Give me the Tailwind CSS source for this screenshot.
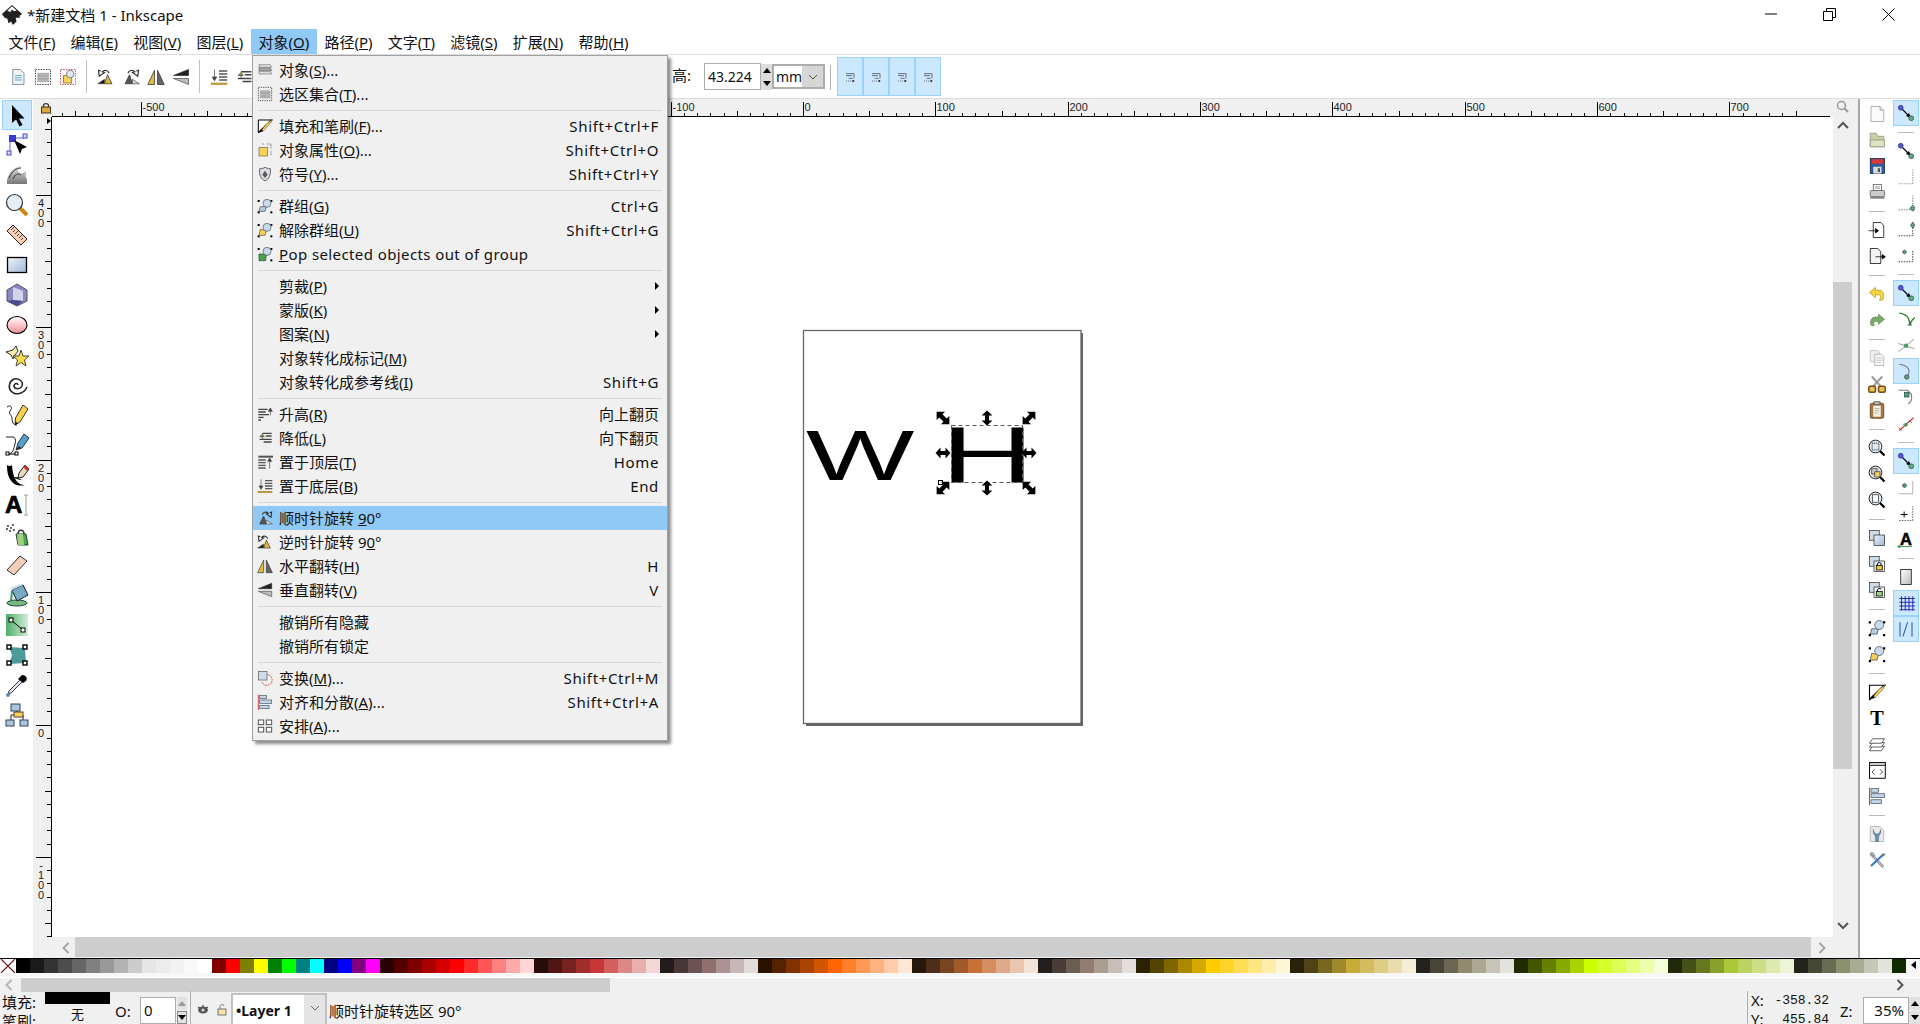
<!DOCTYPE html>
<html lang="zh">
<head>
  <meta charset="UTF-8" />
  <title>*新建文档 1 - Inkscape</title>
  <script src="https://cdn.jsdelivr.net/npm/@tailwindcss/browser@4"></script>
</head>
<body class="w-[1920px] h-[1024px] overflow-hidden bg-[#f0f0f0] text-[15px] text-[#111] font-['Noto_Sans','Noto_Sans_CJK_SC',sans-serif]">

  <!-- icon sheet -->
  <svg class="absolute w-0 h-0" width="0" height="0">
    <defs>
      <linearGradient id="gBlue" x1="0" y1="0" x2="1" y2="1"><stop offset="0" stop-color="#eef4fa"/><stop offset="1" stop-color="#9db8d6"/></linearGradient>
      <linearGradient id="gPink" x1="0" y1="0" x2="0" y2="1"><stop offset="0" stop-color="#fff"/><stop offset="1" stop-color="#f28c96"/></linearGradient>
      <linearGradient id="gGray" x1="0" y1="0" x2="0" y2="1"><stop offset="0" stop-color="#ddd"/><stop offset="1" stop-color="#777"/></linearGradient>
      <linearGradient id="gGreen" x1="0" y1="0" x2="1" y2="0"><stop offset="0" stop-color="#4caf68"/><stop offset="1" stop-color="#d4ecd8"/></linearGradient>
      <linearGradient id="gPage" x1="0" y1="0" x2="1" y2="1"><stop offset="0" stop-color="#fff"/><stop offset="1" stop-color="#bbb"/></linearGradient>
      <symbol id="t-sel" viewBox="0 0 24 24"><path d="M7 2V20L11 16.5L14.5 23.5L17.5 22L14 15.5H19.5Z" fill="#000"/></symbol>
      <symbol id="t-node" viewBox="0 0 24 24"><path d="M8 5H19M5 9V19" stroke="#66c" fill="none"/><rect x="4" y="2" width="7" height="7" fill="#3a3ad0"/><rect x="18" y="1" width="4" height="4" fill="#dde" stroke="#44c"/><rect x="2" y="18" width="4" height="4" fill="#dde" stroke="#44c"/><path d="M9 7L22 14L17 16L15 21Z" fill="#000"/></symbol>
      <symbol id="t-tweak" viewBox="0 0 24 24"><path d="M2 21V17C5 8 10 2 17 4C12 5 12 9 15 10C18 11 20 9 21 8C21 12 20 14 22 16V21Z" fill="url(#gGray)"/><path d="M4 15C7 8 11 5 16 5M8 16C10 11 13 10 16 12" stroke="#333" fill="none"/></symbol>
      <symbol id="t-zoom" viewBox="0 0 24 24"><path d="M14 14L22 22" stroke="#c98a17" stroke-width="4"/><circle cx="9.5" cy="9.500" r="8" fill="#e5eef5" stroke="#333" stroke-width="1.200"/></symbol>
      <symbol id="t-measure" viewBox="0 0 24 24"><path d="M8 2L22 16L16 22L2 8Z" fill="#f4cdb4" stroke="#222"/><path d="M6 7L9 4M8 9L10 7M10 11L13 8M12 13L14 11M14 15L17 12M16 17L18 15" stroke="#222" stroke-width=".8"/></symbol>
      <symbol id="t-rect" viewBox="0 0 24 24"><rect x="2.500" y="4.500" width="19" height="15" fill="url(#gBlue)" stroke="#000" stroke-width="1.300"/></symbol>
      <symbol id="t-3d" viewBox="0 0 24 24"><path d="M12 1L22 7V18L12 23L2 18V7Z" fill="#8a87c4" stroke="#555"/><path d="M8 4L18 8V18L8 17Z" fill="#d4d3ec"/><path d="M8 17L18 18L12 23L2 18Z" fill="#4d4a92"/></symbol>
      <symbol id="t-ell" viewBox="0 0 24 24"><ellipse cx="12" cy="12" rx="10" ry="8.500" fill="url(#gPink)" stroke="#000" stroke-width="1.100"/></symbol>
      <symbol id="t-star" viewBox="0 0 24 24"><path d="M1 9L8 7L11 3L13 8L10 12L8 16L6 12Z" fill="#f5edb0" stroke="#333"/><path d="M16 7L18 13L24 13L19.500 17L21 23L16 19.500L11 23L12.500 17L8 13L14 13Z" fill="#f7dc4d" stroke="#333" stroke-width=".9"/></symbol>
      <symbol id="t-spiral" viewBox="0 0 24 24"><path d="M13 12C13 10 9 10 9 13C9 16 15 17 17 13C19 8 13 5 9 6C4 8 3 15 6 18C10 23 19 21 22 14" fill="none" stroke="#222" stroke-width="1.500"/></symbol>
      <symbol id="t-pencil" viewBox="0 0 24 24"><path d="M2 4C6 1 8 5 5 8C3 11 7 12 7 15C7 19 8 22 12 22" fill="none" stroke="#222"/><path d="M18 2L23 6L15 19L10 22L10.500 15Z" fill="#f6d24a" stroke="#333"/><path d="M10.500 19L10 22L13 20Z" fill="#000"/></symbol>
      <symbol id="t-pen" viewBox="0 0 24 24"><path d="M1 4H8C13 5 9 14 8 18C6 21 4 21 2 21" fill="none" stroke="#222"/><rect x="1" y="19" width="3" height="3" fill="#fff" stroke="#000"/><rect x="10" y="19" width="3" height="3" fill="#fff" stroke="#000"/><path d="M4 21H10" stroke="#000"/><path d="M19 1L24 5L17 15L11 17L13 10Z" fill="#5a9fc9" stroke="#234"/><path d="M11 17L14 13L16 15Z" fill="#222"/></symbol>
      <symbol id="t-cal" viewBox="0 0 24 24"><path d="M2 2C2 9 3 15 8 20C12 23 16 23 20 22C14 22 8 18 7 2C5 4 4 3 2 2Z" fill="#000"/><path d="M8 14C10 15 13 17 17 17L12 14Z" fill="#222"/><path d="M20 2L24 6L18 14L13 15L14 10Z" fill="#e8dcc0" stroke="#222"/><path d="M20 2L24 6L22 8L18 4Z" fill="#c33"/></symbol>
      <symbol id="t-txt" viewBox="0 0 24 24"><text x="0" y="20" font-family="Liberation Sans" font-weight="700" font-size="24" fill="#000" stroke="#000" stroke-width=".7">A</text><path d="M19 2H23M21 2V22M19 22H23" stroke="#888" stroke-width=".8" fill="none"/></symbol>
      <symbol id="t-spray" viewBox="0 0 24 24"><path d="M2 3H4M5 5H7M1 6H3M4 8H6M7 2H9M8 7H10" stroke="#333" stroke-width="1.500"/><path d="M11 11H21L23 22H13Z" fill="#4ca34c" stroke="#243"/><path d="M13 11C13 6 19 6 19 11" stroke="#333" fill="none" stroke-width="1.500"/><path d="M12 11H18L19 22H13Z" fill="#9dcf7e"/></symbol>
      <symbol id="t-eraser" viewBox="0 0 24 24"><path d="M15 3L22 8L9 22L2 17Z" fill="#f5cdb9" stroke="#333"/></symbol>
      <symbol id="t-bucket" viewBox="0 0 24 24"><ellipse cx="12" cy="20" rx="10" ry="3" fill="#78b878" stroke="#244"/><path d="M7 7L18 2L23 12L12 18Z" fill="#7aa9c4" stroke="#123"/><path d="M7 7L18 2L16 1L5 5Z" fill="#cde"/><path d="M7 8L6 19" stroke="#396" stroke-width="2"/></symbol>
      <symbol id="t-grad" viewBox="0 0 24 24"><rect x="1" y="1" width="22" height="22" fill="url(#gGreen)"/><path d="M6 7L18 17" stroke="#000"/><rect x="4" y="5" width="4" height="4" fill="#fff" stroke="#000"/><rect x="16" y="15" width="4" height="4" fill="#fff" stroke="#000"/></symbol>
      <symbol id="t-mesh" viewBox="0 0 24 24"><path d="M4 4L20 5L21 20L4 21L7 12Z" fill="#4d9a9a"/><g fill="#fff" stroke="#000" stroke-width="1.400"><rect x="2" y="2" width="4" height="4"/><rect x="18" y="2" width="4" height="4"/><rect x="2" y="18" width="4" height="4"/><rect x="18" y="18" width="4" height="4"/></g></symbol>
      <symbol id="t-drop" viewBox="0 0 24 24"><path d="M16 3C18 0 24 5 21 8L18 10L13 6Z" fill="#000"/><path d="M15 7L17 9L6 20L3 21L4 18Z" fill="#dfe8ee" stroke="#334"/><circle cx="3" cy="22" r="2" fill="#6a8ba8"/></symbol>
      <symbol id="t-conn" viewBox="0 0 24 24"><path d="M6 12V18M18 12V18M6 12H18M12 7V12" stroke="#222" fill="none"/><rect x="6" y="1" width="9" height="7" fill="#a8c4e0" stroke="#345"/><rect x="9" y="9" width="9" height="5" fill="#f5d25a" stroke="#543"/><rect x="1" y="17" width="8" height="6" fill="#a8c4e0" stroke="#345"/><rect x="15" y="17" width="8" height="6" fill="#a8c4e0" stroke="#345"/></symbol>

      <symbol id="c-new" viewBox="0 0 24 24"><path d="M4 2H16L21 7V22H4Z" fill="#fafafa" stroke="#999"/><path d="M16 2V7H21" fill="#ddd" stroke="#999"/></symbol>
      <symbol id="c-open" viewBox="0 0 24 24"><path d="M3 3H11L13 7H21V21H3Z" fill="#c8d0a8" stroke="#8a9070"/><path d="M3 12H22V21H3Z" fill="#dfe5c4" stroke="#8a9070"/></symbol>
      <symbol id="c-save" viewBox="0 0 24 24"><rect x="3" y="2" width="19" height="20" fill="#2b5c9f" stroke="#123"/><rect x="5" y="3" width="15" height="6" fill="#d73a3a"/><rect x="7" y="13" width="11" height="9" fill="#ddd"/><rect x="13" y="15" width="3" height="5" fill="#456"/></symbol>
      <symbol id="c-print" viewBox="0 0 24 24"><rect x="7" y="2" width="11" height="9" fill="#fff" stroke="#555"/><path d="M9 5H16M9 7H16" stroke="#888"/><rect x="3" y="10" width="19" height="8" rx="1" fill="#ccc" stroke="#555"/><rect x="3" y="18" width="19" height="3" fill="#888"/></symbol>
      <symbol id="c-imp" viewBox="0 0 24 24"><path d="M7 2H17L21 6V22H7Z" fill="#fff" stroke="#000"/><path d="M1 13H13M10 10L14 13L10 16Z" stroke="#000" fill="#000"/></symbol>
      <symbol id="c-exp" viewBox="0 0 24 24"><path d="M3 2H13L17 6V22H3Z" fill="#f4f4f4" stroke="#000"/><path d="M10 13H23M19 10L23 13L19 16Z" stroke="#000" fill="#000"/></symbol>
      <symbol id="c-undo" viewBox="0 0 24 24"><path d="M2 10L10 3V7H16C21 8 22 14 20 19C19 21 17 21 15 20C18 17 17 13 14 13H10V17Z" fill="#f3d43e" stroke="#b59a20"/></symbol>
      <symbol id="c-redo" viewBox="0 0 24 24"><path d="M22 11L14 4V8H9C4 9 2 14 4 19C6 20 7 20 9 19C6 17 8 14 10 14H14V18Z" fill="#7aa868" stroke="#4a6e3a" stroke-dasharray="1.500 1"/></symbol>
      <symbol id="c-copy" viewBox="0 0 24 24"><path d="M3 2H13L15 4V17H3Z" fill="#eee" stroke="#bbb"/><path d="M9 7H18L21 10V22H9Z" fill="#f6f6f6" stroke="#aaa"/><path d="M11 12H19M11 15H19M11 18H17" stroke="#bbb"/></symbol>
      <symbol id="c-cut" viewBox="0 0 24 24"><path d="M5 2L17 15M19 2L7 15" stroke="#999" stroke-width="2.500"/><rect x="1" y="15" width="9" height="8" rx="2" fill="#e0c060" stroke="#7a4a10" stroke-width="2"/><rect x="14" y="15" width="9" height="8" rx="2" fill="#e0c060" stroke="#7a4a10" stroke-width="2"/></symbol>
      <symbol id="c-paste" viewBox="0 0 24 24"><rect x="3" y="3" width="18" height="20" rx="2" fill="#a9763d" stroke="#5d3a14"/><path d="M7 6H17V21H7Z" fill="#f4f0e6"/><rect x="8" y="1" width="8" height="4" fill="#bbb" stroke="#444"/><path d="M9 10H15M9 13H15M9 16H13" stroke="#999"/></symbol>
      <symbol id="c-zsel" viewBox="0 0 24 24"><path d="M15 15L22 22" stroke="#000" stroke-width="3"/><circle cx="10" cy="10" r="8.500" fill="#dfe9f0" stroke="#222" stroke-width="1.300"/><rect x="5.500" y="5.500" width="9" height="9" fill="none" stroke="#000" stroke-dasharray="1.500 1"/></symbol>
      <symbol id="c-zdraw" viewBox="0 0 24 24"><path d="M15 15L22 22" stroke="#000" stroke-width="3"/><circle cx="10" cy="10" r="8.500" fill="#dfe9f0" stroke="#222" stroke-width="1.300"/><rect x="5" y="5" width="7" height="7" fill="#ccc" stroke="#333"/><rect x="9" y="9" width="7" height="7" fill="#f5d25a" stroke="#333"/></symbol>
      <symbol id="c-zpage" viewBox="0 0 24 24"><path d="M15 15L22 22" stroke="#000" stroke-width="3"/><circle cx="10" cy="10" r="8.500" fill="#dfe9f0" stroke="#222" stroke-width="1.300"/><rect x="6" y="5" width="8" height="10" fill="#fff" stroke="#333"/></symbol>
      <symbol id="c-dup" viewBox="0 0 24 24"><rect x="2" y="2" width="13" height="13" fill="#cfdcea" stroke="#333"/><rect x="8" y="8" width="14" height="14" fill="url(#gBlue)" stroke="#333"/></symbol>
      <symbol id="c-clone" viewBox="0 0 24 24"><rect x="2" y="2" width="13" height="13" fill="#cfdcea" stroke="#333"/><rect x="8" y="8" width="14" height="14" fill="#eef2f6" stroke="#333"/><rect x="11" y="14" width="8" height="6" fill="#f0c93c" stroke="#000"/><path d="M12.500 14V12C12.500 9.500 17.500 9.500 17.500 12V14" fill="none" stroke="#000" stroke-width="1.300"/></symbol>
      <symbol id="c-unl" viewBox="0 0 24 24"><rect x="2" y="2" width="13" height="13" fill="#cfdcea" stroke="#333"/><rect x="8" y="8" width="14" height="14" fill="#eef2f6" stroke="#333"/><rect x="11" y="14" width="8" height="6" fill="#9dcf7e" stroke="#000"/><path d="M12.500 14V12C12.500 9.500 17.500 9.500 17.500 11" fill="none" stroke="#000" stroke-width="1.300"/></symbol>
      <symbol id="c-grp" viewBox="0 0 24 24"><g fill="#000"><rect x="1" y="3" width="3" height="3"/><rect x="20" y="3" width="3" height="3"/><rect x="1" y="20" width="3" height="3"/><rect x="20" y="20" width="3" height="3"/></g><path d="M5 13H14L12 20H3Z" fill="#b9cce0" stroke="#345"/><circle cx="15" cy="8" r="6" fill="#c9d9e8" stroke="#456"/></symbol>
      <symbol id="c-ungrp" viewBox="0 0 24 24"><g fill="#000"><rect x="1" y="3" width="3" height="3"/><rect x="20" y="3" width="3" height="3"/><rect x="1" y="20" width="3" height="3"/><rect x="20" y="20" width="3" height="3"/></g><path d="M5 11L14 13L12 20H3Z" fill="#f5d25a" stroke="#543"/><circle cx="15" cy="8" r="6" fill="#c9d9e8" stroke="#456"/></symbol>
      <symbol id="c-pop" viewBox="0 0 24 24"><g fill="#000"><rect x="1" y="3" width="3" height="3"/><rect x="20" y="3" width="3" height="3"/><rect x="20" y="20" width="3" height="3"/></g><path d="M3 12H14L13 22H3Z" fill="#4ca34c" stroke="#243"/><circle cx="15" cy="8" r="6" fill="#c9d9e8" stroke="#456"/></symbol>
      <symbol id="c-fill" viewBox="0 0 24 24"><path d="M2 3H22L2 22Z" fill="#fff" stroke="#000" stroke-width="1.500"/><path d="M2 22H22V3Z" fill="none"/><path d="M2 22L22 3" stroke="#000" stroke-width="2"/><path d="M9 20L20 8L24 2L15 8L7 18Z" fill="#f5d25a" stroke="#432" stroke-width=".7"/><path d="M2 22L9 20L7 16Z" fill="#000"/></symbol>
      <symbol id="c-t" viewBox="0 0 24 24"><text x="12" y="21" text-anchor="middle" font-family="Liberation Serif" font-weight="700" font-size="27" fill="#000">T</text></symbol>
      <symbol id="c-layers" viewBox="0 0 24 24"><g fill="#fff" stroke="#333"><path d="M6 15H22L18 21H2Z"/><path d="M6 10H22L18 16H2Z"/><path d="M6 5H22L18 11H2Z"/></g></symbol>
      <symbol id="c-xml" viewBox="0 0 24 24"><rect x="2" y="2" width="21" height="21" fill="#fff" stroke="#000" stroke-width="1.300"/><rect x="2" y="2" width="21" height="4" fill="#ccc" stroke="#000"/><path d="M9 11L5.500 14.500L9 18M16 11L19.500 14.500L16 18" fill="none" stroke="#333" stroke-width="1.200"/></symbol>
      <symbol id="c-align" viewBox="0 0 24 24"><path d="M2 1V24" stroke="#c83232" stroke-width="1.300"/><rect x="4" y="2" width="10" height="5" fill="#c5d6e8" stroke="#456"/><rect x="4" y="9" width="18" height="5" fill="#c5d6e8" stroke="#456"/><rect x="4" y="17" width="14" height="5" fill="#c5d6e8" stroke="#456"/></symbol>
      <symbol id="c-doc" viewBox="0 0 24 24"><path d="M3 2H16L21 7V22H3Z" fill="#e8e8e8" stroke="#aaa"/><path d="M7 6C8 11 10 12 12 12C14 12 16 11 17 6V10C16 13 14 14 14 16V22H10V16C10 14 8 13 7 10Z" fill="#5f92bf" stroke="#345" stroke-width=".5"/></symbol>
      <symbol id="c-pref" viewBox="0 0 24 24"><path d="M5 3L21 20L19 22L3 5Z" fill="#bbb" stroke="#778"/><path d="M21 4L4 20" stroke="#3c7ab8" stroke-width="3"/><path d="M3 3C6 1 9 3 8 7L5 6Z M21 3L23 5L19 7Z" fill="#bbb" stroke="#667"/></symbol>

      <symbol id="s-nodes" viewBox="0 0 24 24"><path d="M6 6L17 17" stroke="#000" stroke-width="1.500"/><path d="M19 19L12 16L16 12Z" fill="#000"/><circle cx="5" cy="5" r="3.200" fill="#5555dd" stroke="#337"/><circle cx="19" cy="19" r="3.200" fill="#66aa88" stroke="#254"/></symbol>
      <symbol id="s-bbox" viewBox="0 0 24 24"><path d="M2 21H21M21 21V2" stroke="#777" stroke-dasharray="2 1.500" fill="none"/></symbol>
      <symbol id="s-bbedge" viewBox="0 0 24 24"><path d="M2 21H21M21 21V2" stroke="#555" stroke-dasharray="2 1.500" fill="none"/><path d="M21 15L25 19L21 23L17 19Z" fill="#6a9a80" stroke="#354"/></symbol>
      <symbol id="s-mid" viewBox="0 0 24 24"><path d="M2 21H21V2" stroke="#000" stroke-dasharray="2 1.500" fill="none"/><path d="M21 3L24 7L21 11L18 7Z" fill="#6a9a80" stroke="#354"/></symbol>
      <symbol id="s-cen" viewBox="0 0 24 24"><path d="M2 21H21V5" stroke="#000" stroke-dasharray="2 1.500" fill="none"/><path d="M10 5L13 8L10 11L7 8Z" fill="#6a9a80" stroke="#354"/></symbol>
      <symbol id="s-curve" viewBox="0 0 24 24"><path d="M3 4C12 5 17 10 17 20C19 14 21 12 24 10M14 20L20 20" stroke="#286e28" stroke-width="1.500" fill="none"/></symbol>
      <symbol id="s-inter" viewBox="0 0 24 24"><path d="M2 21L23 4M2 10L23 17" stroke="#777"/><circle cx="12" cy="13" r="3" fill="#4a9a6a"/></symbol>
      <symbol id="s-cusp" viewBox="0 0 24 24"><path d="M3 3C12 4 20 9 14 19" stroke="#778" stroke-width="1.500" fill="none"/><circle cx="13" cy="20" r="3" fill="#5a9a80" stroke="#354"/></symbol>
      <symbol id="s-smooth" viewBox="0 0 24 24"><path d="M2 3H14L19 8C21 15 18 20 15 21" stroke="#778" stroke-width="1.500" fill="none"/><rect x="10" y="6" width="6" height="6" fill="#5a9a80" stroke="#254"/></symbol>
      <symbol id="s-path" viewBox="0 0 24 24"><path d="M3 22L22 5" stroke="#c83232" stroke-width="1.500"/><path d="M2 18L7 22M8 13L12 17M16 8L20 12" stroke="#c83232"/><circle cx="12" cy="14" r="2.500" fill="#4a9a6a"/></symbol>
      <symbol id="s-cpage" viewBox="0 0 24 24"><path d="M3 21H21V4" stroke="#999" fill="none"/><circle cx="10" cy="10" r="2.500" fill="#5a9a80" stroke="#254"/></symbol>
      <symbol id="s-guide" viewBox="0 0 24 24"><path d="M3 22H21M21 22V3" stroke="#333" stroke-dasharray="2 1.500" fill="none"/><path d="M5 14H14M9.500 10V18" stroke="#000" stroke-width="1.300"/></symbol>
      <symbol id="s-text" viewBox="0 0 24 24"><text x="4" y="20" font-family="Liberation Sans" font-weight="700" font-size="22" fill="#000" stroke="#000" stroke-width=".6">A</text><path d="M1 22H20" stroke="#4a9a6a" stroke-width="1.500"/><circle cx="3" cy="22" r="2" fill="#4a9a6a"/></symbol>
      <symbol id="s-page" viewBox="0 0 24 24"><rect x="5" y="2" width="14" height="20" fill="url(#gPage)" stroke="#000"/></symbol>
      <symbol id="s-grid" viewBox="0 0 24 24"><path d="M6 3V22M11 3V22M16 3V22M21 3V22M3 6H24M3 11H24M3 16H24M3 21H24" stroke="#1a1ab0" stroke-width="1.200"/></symbol>
      <symbol id="s-glines" viewBox="0 0 24 24"><path d="M4 3V22M20 3V22M14 3L8 22" stroke="#1a4ab0" stroke-width="1.300"/></symbol>
      <symbol id="s-btn" viewBox="0 0 24 24"><path d="M6 7H18V14M6 10H15M10 14H16" stroke="#333" fill="none"/><path d="M6 18H18" stroke="#333" stroke-dasharray="1.500 1.500"/><path d="M16 16L19 18L16 20Z" fill="#000"/></symbol>

      <symbol id="m-objs" viewBox="0 0 24 24"><path d="M3 4H20L22 8H3Z" fill="#ddd" stroke="#777"/><path d="M3 9H20L22 13H3Z" fill="#aaa" stroke="#666"/><path d="M3 14H20L22 18H3Z" fill="#ddd" stroke="#777"/></symbol>
      <symbol id="m-selset" viewBox="0 0 24 24"><rect x="2" y="2" width="20" height="20" fill="none" stroke="#111" stroke-dasharray="2 1.500"/><path d="M5 7H19L20 10H5ZM5 11H19L20 14H5ZM5 15H19L20 18H5Z" fill="#bbb" stroke="#777" stroke-width=".6"/></symbol>
      <symbol id="m-selred" viewBox="0 0 24 24"><rect x="2" y="2" width="20" height="20" fill="none" stroke="#b22" stroke-dasharray="2 1.500"/><rect x="6" y="10" width="11" height="10" fill="#f5d25a" stroke="#763"/><circle cx="15" cy="8" r="5" fill="#dfe9f0" stroke="#667"/></symbol>
      <symbol id="m-doc" viewBox="0 0 24 24"><path d="M5 2H15L20 7V22H5Z" fill="#eef3f8" stroke="#678"/><path d="M8 10H17M8 13H17M8 16H17" stroke="#39a"/></symbol>
      <symbol id="m-props" viewBox="0 0 24 24"><rect x="3" y="8" width="13" height="13" fill="#f5d25a" stroke="#763"/><path d="M15 3H21V10M21 14V21M8 3H11" stroke="#333" stroke-dasharray="2 1.500" fill="none"/></symbol>
      <symbol id="m-shield" viewBox="0 0 24 24"><path d="M4 4C9 4 10 3 12 2C14 3 16 4 20 4C21 14 18 20 12 22C6 20 3 14 4 4Z" fill="#ddd" stroke="#666" stroke-width="1.500"/><path d="M12 7L16 13L12 18L8 13Z" fill="#556"/></symbol>
      <symbol id="m-raise" viewBox="0 0 24 24"><path d="M2 5H16M2 9H13M2 13H18M2 17H10M2 21H6" stroke="#444" stroke-width="2"/><path d="M20 14V6M17 8L20 3L23 8Z" stroke="#444" fill="#444"/></symbol>
      <symbol id="m-lower" viewBox="0 0 24 24"><path d="M22 5H8M22 9H13M22 14H4M22 18H10" stroke="#444" stroke-width="2"/><path d="M8 14V9M4 10L8 6L11 10Z" stroke="#444" fill="#b89a40"/></symbol>
      <symbol id="m-top" viewBox="0 0 24 24"><path d="M2 4H24" stroke="#555" stroke-width="3"/><path d="M2 9H13M2 13H13M2 17H13M2 21H13" stroke="#555" stroke-width="2"/><path d="M19 22V10M16 11L19 6L22 11Z" stroke="#444" fill="#444"/></symbol>
      <symbol id="m-bot" viewBox="0 0 24 24"><path d="M12 4H23M12 8H23M12 12H23M12 16H23" stroke="#555" stroke-width="2"/><path d="M1 21H23" stroke="#b89a40" stroke-width="3"/><path d="M6 2V13M3 12L6 17L9 12Z" stroke="#444" fill="#444"/></symbol>
      <symbol id="m-cw" viewBox="0 0 24 24"><path d="M8 7C9 3 14 2 17 5L14 6L21 11L22 3L19 4" fill="none" stroke="#333" stroke-width="1.600"/><path d="M4 21L10 9L14 21Z" fill="#555" stroke="#333"/><path d="M14 21H23L14 15Z" fill="#ddd" stroke="#555"/></symbol>
      <symbol id="m-ccw" viewBox="0 0 24 24"><path d="M16 7C15 3 10 2 7 5L10 6L3 11L2 3L5 4" fill="none" stroke="#333" stroke-width="1.600"/><path d="M20 21L14 9L10 21Z" fill="#e0b840" stroke="#333"/><path d="M10 21H1L10 15Z" fill="#111" stroke="#555"/></symbol>
      <symbol id="m-fh" viewBox="0 0 24 24"><path d="M10 3V22H1Z" fill="#e3b93c" stroke="#333"/><path d="M14 3V22H23Z" fill="#666" stroke="#333"/></symbol>
      <symbol id="m-fv" viewBox="0 0 24 24"><path d="M22 2V10L2 10Z" fill="#222" stroke="#333"/><path d="M22 14V22L2 14Z" fill="#bbb" stroke="#555"/></symbol>
      <symbol id="m-trans" viewBox="0 0 24 24"><rect x="2" y="2" width="13" height="13" fill="#cfdcea" stroke="#555"/><path d="M15 7A8 8 0 1 1 7 17" fill="none" stroke="#c83232" stroke-dasharray="2 1.500" stroke-width="1.500"/></symbol>
      <symbol id="m-arr" viewBox="0 0 24 24"><g fill="#fff" stroke="#555" stroke-width="1.500"><rect x="2" y="3" width="8" height="7"/><rect x="14" y="3" width="8" height="7"/><rect x="2" y="14" width="8" height="7"/><rect x="14" y="14" width="8" height="7"/></g></symbol>
    </defs>
  </svg>

  <!-- title bar -->
  <div class="h-[29px] bg-white flex items-center relative">
    <svg class="w-[22px] h-[22px] ml-[1px]" viewBox="0 0 24 24"><path d="M12 1L23 11L20 13L21 15L16 15L17 19L13 23L11 19L8 21L7 16L4 15L1 11Z" fill="#222"/><path d="M12 2.500L17 7L14 8L12 6L10 9L7 7Z" fill="#fff"/></svg>
    <span class="ml-[4px] leading-[20px]">*新建文档 1 - Inkscape</span>
    <svg class="absolute left-[1765px] top-[13px] w-[12px] h-[2px]" viewBox="0 0 12 2"><path d="M0 1H12" stroke="#000"/></svg>
    <svg class="absolute left-[1823px] top-[8px] w-[13px] h-[13px]" viewBox="0 0 13 13"><path d="M.5 3.500H9.500V12.500H.5ZM3.500 3.500V.5H12.500V9.500H9.500" fill="none" stroke="#000"/></svg>
    <svg class="absolute left-[1882px] top-[8px] w-[13px] h-[13px]" viewBox="0 0 13 13"><path d="M.5 .5L12.500 12.500M12.500 .5L.5 12.500" stroke="#000"/></svg>
  </div>

  <!-- menu bar -->
  <div class="h-[26px] bg-white border-b border-[#dcdcdc] flex pl-[1px]">
    <div class="px-[7.6px] leading-[27px]">文件(<u>F</u>)</div>
    <div class="px-[7.6px] leading-[27px]">编辑(<u>E</u>)</div>
    <div class="px-[7.6px] leading-[27px]">视图(<u>V</u>)</div>
    <div class="px-[7.6px] leading-[27px]">图层(<u>L</u>)</div>
    <div class="px-[7.6px] leading-[27px] bg-[#90c8f6]">对象(<u>O</u>)</div>
    <div class="px-[7.6px] leading-[27px]">路径(<u>P</u>)</div>
    <div class="px-[7.6px] leading-[27px]">文字(<u>T</u>)</div>
    <div class="px-[7.6px] leading-[27px]">滤镜(<u>S</u>)</div>
    <div class="px-[7.6px] leading-[27px]">扩展(<u>N</u>)</div>
    <div class="px-[7.6px] leading-[27px]">帮助(<u>H</u>)</div>
  </div>

  <!-- command bar -->
  <div class="h-[44px] bg-white border-b border-[#dcdcdc] flex items-center relative">
    <div id="topIcons" class="flex items-center pl-[5px]"></div>
    <span class="absolute left-[672px] top-[10px] leading-[20px]">高:</span>
    <div class="absolute left-[704px] top-[8px] w-[57px] h-[27px] border border-[#adadad] bg-white pl-[3px] leading-[25px] text-[14px]">43.224</div>
    <div class="absolute left-[761px] top-[9px] w-[11px] h-[26px] flex flex-col bg-[#dcdcdc]">
      <div class="h-[13px] flex items-center justify-center"><div class="w-0 h-0 border-x-[4px] border-x-transparent border-b-[5px] border-b-black"></div></div>
      <div class="h-[13px] flex items-center justify-center"><div class="w-0 h-0 border-x-[4px] border-x-transparent border-t-[5px] border-t-black"></div></div>
    </div>
    <div class="absolute left-[772px] top-[9px] w-[53px] h-[25px] border-2 border-[#adadad] bg-white flex items-center pl-[2px]">
      <span class="leading-[20px] text-[14px]">mm</span>
      <div class="ml-auto w-[21px] h-full bg-[#d6d6d6] flex items-center justify-center">
        <svg class="w-[10px] h-[6px]" viewBox="0 0 10 6"><path d="M1 1L5 5L9 1" fill="none" stroke="#555"/></svg>
      </div>
    </div>
    <div class="absolute left-[830px] top-[10px] w-px h-[25px] bg-[#b0b0b0]"></div>
    <div class="absolute left-[837px] top-[2px] flex">
      <div class="w-[26px] h-[39px] bg-[#cce8ff] border border-[#99d1ff] flex items-center justify-center"><svg class="w-4 h-4"><use href="#s-btn"/></svg></div>
      <div class="w-[26px] h-[39px] bg-[#cce8ff] border border-[#99d1ff] flex items-center justify-center"><svg class="w-4 h-4"><use href="#s-btn"/></svg></div>
      <div class="w-[26px] h-[39px] bg-[#cce8ff] border border-[#99d1ff] flex items-center justify-center"><svg class="w-4 h-4"><use href="#s-btn"/></svg></div>
      <div class="w-[26px] h-[39px] bg-[#cce8ff] border border-[#99d1ff] flex items-center justify-center"><svg class="w-4 h-4"><use href="#s-btn"/></svg></div>
    </div>
  </div>

  <!-- main area -->
  <div class="h-[859px] flex">
    <div id="tools" class="w-[33px] bg-white flex flex-col items-center pt-px"></div>

    <div class="w-[1800px] flex flex-col">
      <div class="h-[18px] relative">
        <svg id="rulerTop" class="w-[1800px] h-[18px] block"></svg>
        <svg class="absolute left-[7px] top-[3px] w-3 h-3" viewBox="0 0 12 12"><rect x="1.500" y="5" width="9" height="6" fill="#d9a93a" stroke="#432"/><path d="M3.500 5V3.500C3.500 1 8.500 1 8.500 3.500V5" fill="none" stroke="#432" stroke-width="1.300"/></svg>
      </div>
      <div class="h-[820px] flex">
        <svg id="rulerLeft" class="w-[19px] h-[820px] block"></svg>
        <svg class="w-[1781px] h-[820px] block bg-white" viewBox="52 117 1781 820">
          <rect x="806" y="333" width="277" height="393" fill="#666"/>
          <rect x="803.500" y="330.500" width="277.500" height="393" fill="#fff" stroke="#666" stroke-width="1.300"/>
          <text transform="translate(806 480) scale(1.640 1)" font-family="Liberation Sans" font-size="70" fill="#000">W</text>
          <text transform="translate(941 482) scale(1.610 1)" font-family="Liberation Sans" font-size="80" fill="#000">H</text>
          <rect x="951.500" y="425.500" width="71" height="57" fill="none" stroke="#555" stroke-dasharray="4 3"/>
          <rect x="938.500" y="480.500" width="4" height="4" fill="#fff" stroke="#000"/>
          <g fill="#000">
            <path transform="translate(943 453) scale(1.250 1.350)" d="M-6 0L-2 -4V-1.500H2V-4L6 0L2 4V1.500H-2V4Z"/>
            <path transform="translate(1029 453) scale(1.250 1.350)" d="M-6 0L-2 -4V-1.500H2V-4L6 0L2 4V1.500H-2V4Z"/>
            <path transform="translate(987 418) rotate(90) scale(1.250 1.350)" d="M-6 0L-2 -4V-1.500H2V-4L6 0L2 4V1.500H-2V4Z"/>
            <path transform="translate(987 488) rotate(90) scale(1.250 1.350)" d="M-6 0L-2 -4V-1.500H2V-4L6 0L2 4V1.500H-2V4Z"/>
            <path transform="translate(943 418) rotate(45) scale(1.500)" d="M-6 0L-2 -4V-1.500H2V-4L6 0L2 4V1.500H-2V4Z"/>
            <path transform="translate(1029 418) rotate(-45) scale(1.500)" d="M-6 0L-2 -4V-1.500H2V-4L6 0L2 4V1.500H-2V4Z"/>
            <path transform="translate(943 488) rotate(-45) scale(1.500)" d="M-6 0L-2 -4V-1.500H2V-4L6 0L2 4V1.500H-2V4Z"/>
            <path transform="translate(1029 488) rotate(45) scale(1.500)" d="M-6 0L-2 -4V-1.500H2V-4L6 0L2 4V1.500H-2V4Z"/>
          </g>
        </svg>
      </div>
      <div class="h-[21px] flex pl-[23px]">
        <div class="w-[19px] flex items-center justify-center"><svg class="w-[8px] h-[12px]" viewBox="0 0 8 12"><path d="M6.500 1L1.500 6L6.500 11" fill="none" stroke="#a6a6a6" stroke-width="2"/></svg></div>
        <div class="w-[1736px] h-[20px] bg-[#cdcdcd]"></div>
        <div class="w-[22px] flex items-center justify-center"><svg class="w-[8px] h-[12px]" viewBox="0 0 8 12"><path d="M1.500 1L6.500 6L1.500 11" fill="none" stroke="#a6a6a6" stroke-width="2"/></svg></div>
      </div>
    </div>

    <div class="w-[25px] flex">
      <div class="w-[19px] flex flex-col items-center">
        <svg class="w-[13px] h-[13px] mt-[1px]" viewBox="0 0 13 13"><circle cx="5.500" cy="5.500" r="4" fill="none" stroke="#999" stroke-width="1.500"/><path d="M8.500 8.500L12 12" stroke="#999" stroke-width="2"/></svg>
        <svg class="w-[12px] h-[8px] mt-[8px]" viewBox="0 0 12 8"><path d="M1 7L6 2L11 7" fill="none" stroke="#555" stroke-width="2"/></svg>
        <div class="w-[19px] h-[487px] mt-[153px] bg-[#cdcdcd]"></div>
        <svg class="w-[12px] h-[8px] mt-[153px]" viewBox="0 0 12 8"><path d="M1 1L6 6L11 1" fill="none" stroke="#555" stroke-width="2"/></svg>
      </div>
      <div class="w-[6px] h-[838px] bg-[#f0f0f0]"></div>
    </div>

    <div class="w-[2px] bg-[#a8a8a8]"></div>
    <div id="cmds" class="w-[33px] bg-white flex flex-col items-center pt-[2px]"></div>
    <div id="snaps" class="w-[27px] bg-white flex flex-col pt-[1px]"></div>
  </div>

  <!-- palette -->
  <div class="h-[19px] relative border-t border-black bg-[#f7f7f7]">
    <div id="palette" class="flex h-[14px] w-[1909px] overflow-hidden"></div>
    <div class="absolute left-[1911px] top-[2px] w-0 h-0 border-y-[4px] border-y-transparent border-r-[5px] border-r-black"></div>
  </div>

  <!-- palette scrollbar -->
  <div class="h-[14px] flex items-center relative border-t border-white">
    <svg class="ml-[5px] w-[8px] h-[12px]" viewBox="0 0 8 12"><path d="M6.500 1L1.500 6L6.500 11" fill="none" stroke="#b5b5b5" stroke-width="2"/></svg>
    <div class="ml-[8px] w-[589px] h-[14px] bg-[#cdcdcd]"></div>
    <svg class="absolute left-[1896px] top-[1px] w-[8px] h-[12px]" viewBox="0 0 8 12"><path d="M1.500 1L6.500 6L1.500 11" fill="none" stroke="#555" stroke-width="2"/></svg>
  </div>

  <!-- status bar -->
  <div class="h-[33px] overflow-hidden flex relative">
    <div class="w-[45px] pl-[2px] pt-[2px] leading-[19px] flex flex-col">
      <span>填充:</span>
      <span>笔刷:</span>
    </div>
    <div class="w-[65px] flex flex-col items-center">
      <div class="w-[65px] h-[19px] bg-black mt-[1px]"></div>
      <span class="leading-[19px] mt-[1px] text-[13px]">无</span>
    </div>
    <span class="ml-[5px] mt-[10px] leading-[20px]">O:</span>
    <div class="absolute left-[140px] top-[6px] w-[36px] h-[27px] border border-[#adadad] bg-white pl-[3px] leading-[25px]">0</div>
    <div class="absolute left-[177px] top-[6px] w-[10px] h-[27px] flex flex-col gap-px">
      <div class="h-[13px] bg-[#e2e2e2] flex items-center justify-center"><div class="w-0 h-0 border-x-[4px] border-x-transparent border-b-[5px] border-b-[#999]"></div></div>
      <div class="h-[13px] bg-[#e2e2e2] border border-[#888] flex items-center justify-center"><div class="w-0 h-0 border-x-[4px] border-x-transparent border-t-[5px] border-t-black"></div></div>
    </div>
    <div class="absolute left-[190px] top-0 w-px h-[33px] bg-[#b0b0b0]"></div>
    <svg class="absolute left-[197px] top-[14px] w-[12px] h-[10px]" viewBox="0 0 12 10"><ellipse cx="6" cy="5" rx="5" ry="3.500" fill="#555"/><path d="M1 2L3 3M6 0V2M11 2L9 3" stroke="#333"/><circle cx="6" cy="5" r="1.500" fill="#ddd"/></svg>
    <svg class="absolute left-[216px] top-[12px] w-[12px] h-[13px]" viewBox="0 0 12 13"><rect x="2" y="6" width="8" height="6" fill="#f4e3a8" stroke="#777"/><path d="M4 6V3.500C4 1 8 1 8 3" fill="none" stroke="#777"/></svg>
    <div class="absolute left-[231px] top-[2px] w-[96px] h-[33px] border-x-2 border-t-2 border-[#c0c0c0] bg-white flex">
      <span class="pl-[3px] mt-[6px] font-bold text-[14px] leading-[20px] whitespace-nowrap">•Layer 1</span>
      <div class="ml-auto w-[21px] bg-[#e4e4e4] flex justify-center pt-[10px]"><svg class="w-[10px] h-[6px]" viewBox="0 0 10 6"><path d="M1 1L5 5L9 1" fill="none" stroke="#666"/></svg></div>
    </div>
    <span class="absolute left-[329px] top-[10px] leading-[20px]">顺时针旋转选区 90°</span>
    <div class="absolute left-[1747px] top-0 w-px h-[33px] bg-[#b0b0b0]"></div>
    <div class="absolute left-[1751px] top-0 flex flex-col w-[78px] leading-[19px]">
      <div class="flex justify-between h-[19px]"><span>X:</span><span class="font-['Liberation_Mono',monospace] text-[13px]">-358.32</span></div>
      <div class="flex justify-between h-[19px]"><span>Y:</span><span class="font-['Liberation_Mono',monospace] text-[13px]">455.84</span></div>
    </div>
    <span class="absolute left-[1840px] top-[10px] leading-[20px]">Z:</span>
    <div class="absolute left-[1863px] top-[6px] w-[46px] h-[27px] border border-[#adadad] bg-white text-right pr-[4px] leading-[25px]">35%</div>
    <div class="absolute left-[1909px] top-[6px] w-[11px] h-[27px] flex flex-col gap-px">
      <div class="h-[13px] bg-[#e2e2e2] flex items-center justify-center"><div class="w-0 h-0 border-x-[4px] border-x-transparent border-b-[5px] border-b-black"></div></div>
      <div class="h-[13px] bg-[#e2e2e2] flex items-center justify-center"><div class="w-0 h-0 border-x-[4px] border-x-transparent border-t-[5px] border-t-black"></div></div>
    </div>
  </div>

  <!-- object menu -->
  <div id="menu" class="absolute left-[252px] top-[55px] w-[416px] h-[686px] bg-[#f0f0f0] border border-[#a0a0a0] py-[2px] shadow-[3px_3px_3px_rgba(0,0,0,0.45)]"></div>

  <script>
    const ic = (id, cls) => `<svg class="${cls}"><use href="#${id}"/></svg>`;

    // top toolbar, only the part left of the menu is visible
    const topList = ['m-doc', 'm-selset', 'm-selred', '|', 'm-ccw', 'm-cw', 'm-fh', 'm-fv', '|', 'm-bot', 'm-lower'];
    document.getElementById('topIcons').innerHTML = topList.map(t => t === '|'
      ? '<div class="w-px h-[33px] bg-[#c0c0c0] mx-[6px]"></div>'
      : `<div class="w-[25px] flex justify-center">${ic(t, 'w-[18px] h-[18px]')}</div>`).join('');

    const tools = ['t-sel','t-node','t-tweak','t-zoom','t-measure','t-rect','t-3d','t-ell','t-star','t-spiral','t-pencil','t-pen','t-cal','t-txt','t-spray','t-eraser','t-bucket','t-grad','t-mesh','t-drop','t-conn'];
    document.getElementById('tools').innerHTML = tools.map((t, i) =>
      `<div class="w-[30px] h-[30px] flex items-center justify-center border ${i === 0 ? 'bg-[#cce8ff] border-[#99d1ff]' : 'border-transparent'}">${ic(t, 'w-6 h-6')}</div>`).join('');

    const cmds = ['c-new','c-open','c-save','c-print','|','c-imp','c-exp','|','c-undo','c-redo','|','c-copy','c-cut','c-paste','|','c-zsel','c-zdraw','c-zpage','|','c-dup','c-clone','c-unl','|','c-grp','c-ungrp','|','c-fill','c-t','c-layers','c-xml','c-align','|','c-doc','c-pref'];
    document.getElementById('cmds').innerHTML = cmds.map(t => t === '|'
      ? '<div class="h-[12px] flex items-center"><div class="w-4 h-px bg-[#bbb]"></div></div>'
      : `<div class="h-[26px] flex items-center">${ic(t, 'w-[18px] h-[18px]')}</div>`).join('');

    const snaps = [['s-nodes',1],'|',['s-nodes'],['s-bbox'],['s-bbedge'],['s-mid'],['s-cen'],'|',['s-nodes',1],['s-curve'],['s-inter'],['s-cusp',1],['s-smooth'],['s-path'],'|',['s-nodes',1],['s-cpage'],['s-guide'],['s-text'],'|',['s-page'],['s-grid',1],['s-glines',1]];
    document.getElementById('snaps').innerHTML = snaps.map(s => s === '|'
      ? '<div class="h-[12px] flex items-center pl-[5px]"><div class="w-4 h-px bg-[#bbb]"></div></div>'
      : `<div class="w-[26px] h-[26px] flex items-center justify-center border ${s[1] ? 'bg-[#cce8ff] border-[#99d1ff]' : 'border-transparent'}">${ic(s[0], 'w-[18px] h-[18px]')}</div>`).join('');

    // menu rows: icon, label, shortcut; null is a separator, '>' a submenu
    const rows = [
      ['m-objs','对象(<u>S</u>)...',''],
      ['m-selset','选区集合(<u>T</u>)...',''],
      null,
      ['c-fill','填充和笔刷(<u>F</u>)...','Shift+Ctrl+F'],
      ['m-props','对象属性(<u>O</u>)...','Shift+Ctrl+O'],
      ['m-shield','符号(<u>Y</u>)...','Shift+Ctrl+Y'],
      null,
      ['c-grp','群组(<u>G</u>)','Ctrl+G'],
      ['c-ungrp','解除群组(<u>U</u>)','Shift+Ctrl+G'],
      ['c-pop','<span class="tracking-[0.4px]"><u>P</u>op selected objects out of group</span>',''],
      null,
      ['','剪裁(<u>P</u>)','>'],
      ['','蒙版(<u>K</u>)','>'],
      ['','图案(<u>N</u>)','>'],
      ['','对象转化成标记(<u>M</u>)',''],
      ['','对象转化成参考线(<u>I</u>)','Shift+G'],
      null,
      ['m-raise','升高(<u>R</u>)','向上翻页'],
      ['m-lower','降低(<u>L</u>)','向下翻页'],
      ['m-top','置于顶层(<u>T</u>)','Home'],
      ['m-bot','置于底层(<u>B</u>)','End'],
      null,
      ['m-cw','顺时针旋转 <u>9</u>0°','',1],
      ['m-ccw','逆时针旋转 9<u>0</u>°',''],
      ['m-fh','水平翻转(<u>H</u>)','H'],
      ['m-fv','垂直翻转(<u>V</u>)','V'],
      null,
      ['','撤销所有隐藏',''],
      ['','撤销所有锁定',''],
      null,
      ['m-trans','变换(<u>M</u>)...','Shift+Ctrl+M'],
      ['c-align','对齐和分散(<u>A</u>)...','Shift+Ctrl+A'],
      ['m-arr','安排(<u>A</u>)...',''],
    ];
    document.getElementById('menu').innerHTML = rows.map(r => {
      if (!r) return '<div class="h-[8px] flex items-center px-[5px]"><div class="w-full h-px bg-[#d6d6d6]"></div></div>';
      const latin = /^[A-Za-z+]+$/.test(r[2]);
      const right = r[2] === '>'
        ? '<div class="w-0 h-0 border-y-[4px] border-y-transparent border-l-[4px] border-l-black"></div>'
        : `<span class="${latin ? 'tracking-[0.65px]' : ''}">${r[2]}</span>`;
      const icon = r[0] ? ic(r[0], 'w-4 h-4') : '<div class="w-4"></div>';
      return `<div class="h-6 flex items-center pl-1 pr-2 leading-[24px] ${r[3] ? 'bg-[#90c8f6]' : ''}">${icon}<span class="ml-[6px]">${r[1]}</span><span class="ml-auto flex items-center">${right}</span></div>`;
    }).join('');

    // rulers
    let h = '<rect width="1800" height="18" fill="#f0f0f0"/><path d="M19 17.500H1797" stroke="#000"/>';
    for (let u = -560; u <= 750; u += 10) {
      const x = Math.round(770 + u * 1.3235) + .5;
      if (x < 19 || x > 1797) continue;
      if (u % 100 === 0) {
        h += `<path d="M${x} 3V18" stroke="#000"/><text x="${x + 1}" y="12" font-family="Liberation Sans" font-size="11" fill="#222">${u}</text>`;
      } else {
        h += `<path d="M${x} ${u % 50 === 0 ? 12 : 14}V18" stroke="#000"/>`;
      }
    }
    document.getElementById('rulerTop').innerHTML = h;

    let v = '<rect width="19" height="820" fill="#f0f0f0"/><path d="M18.500 0V820" stroke="#000"/><path d="M14 1L18 4L14 7Z" fill="#000"/>';
    for (let u = 470; u >= -160; u -= 10) {
      const y = Math.round(607.5 - u * 1.324) + .5;
      if (y < 8 || y > 820) continue;
      if (u % 100 === 0) {
        v += `<path d="M3 ${y}H19" stroke="#000"/>`;
        String(u).split('').forEach((d, i) => {
          v += `<text x="8" y="${y + 11 + i * 10}" text-anchor="middle" font-family="Liberation Sans" font-size="11" fill="#222">${d}</text>`;
        });
      } else {
        v += `<path d="M${u % 50 === 0 ? 12 : 14} ${y}H19" stroke="#000"/>`;
      }
    }
    document.getElementById('rulerLeft').innerHTML = v;

    // palette swatches
    const pal = '000000 1a1a1a 333333 4d4d4d 666666 808080 999999 b3b3b3 cccccc e6e6e6 ececec f2f2f2 f9f9f9 ffffff 800000 ff0000 808000 ffff00 008000 00ff00 008080 00ffff 000080 0000ff 800080 ff00ff 2b0000 550000 800000 aa0000 d40000 ff0000 ff2a2a ff5555 ff8080 ffaaaa ffd5d5 280b0b 501616 782121 a02c2c c83737 d35f5f de8787 e9afaf f4d7d7 241c1c 483737 6c5353 916f6f ac9393 c8b7b7 e3dbdb 2b1100 552200 803300 aa4400 d45500 ff6600 ff7f2a ff9955 ffb380 ffccaa ffe6d5 28170b 502d16 784421 a05a2c c87137 d38d5f deaa87 e9c6af f4e3d7 241f1c 483e37 6c5d53 917c6f ac9d93 c8beb7 e3dedb 2b2200 554400 806600 aa8800 d4aa00 ffcc00 ffd42a ffdd55 ffe680 ffeeaa fff6d5 28220b 504416 786721 a0892c c8ab37 d3bc5f decd87 e9ddaf f4eed7 24221c 484537 6c6753 918a6f aca793 c8c4b7 e3e2db 222b00 445500 668000 88aa00 aad400 ccff00 d4ff2a ddff55 e5ff80 eeffaa f6ffd5 22280b 445016 677821 89a02c abc837 bcd35f cdde87 dde9af eef4d7 22241c 454837 676c53 8a916f a7ac93 c4c8b7 e2e3db 112b00'.split(' ');
    document.getElementById('palette').innerHTML =
      '<svg class="w-[16px] h-[14px] shrink-0 bg-white" viewBox="0 0 16 14"><path d="M1 0L15 14M15 0L1 14" stroke="#6b2020" stroke-width="1.200"/></svg>' +
      pal.map(c => `<div class="w-[14px] h-[14px] shrink-0" style="background:#${c}"></div>`).join('');
  </script>
</body>
</html>
